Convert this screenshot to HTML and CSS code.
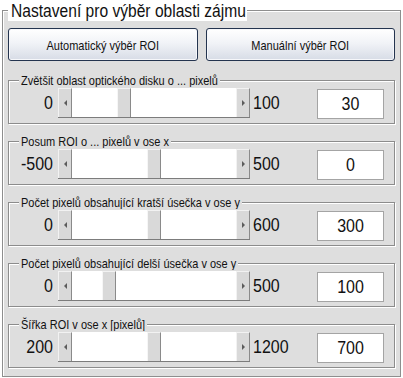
FILE: index.html
```html
<!DOCTYPE html>
<html lang="cs">
<head>
<meta charset="utf-8">
<title>Nastavení pro výběr oblasti zájmu</title>
<link rel="stylesheet" href="styles.css">
</head>
<body>
<section class="panel">
  <h1 class="panel-title"><span class="tall">Nastavení pro výběr oblasti zájmu</span></h1>
  <div class="buttons">
    <button class="btn" type="button"><span class="tall">Automatický výběr ROI</span></button>
    <button class="btn" type="button"><span class="tall">Manuální výběr ROI</span></button>
  </div>

  <div class="group">
    <div class="group-title"><span class="tall">Zvětšit oblast optického disku o ... pixelů</span></div>
    <div class="row">
      <span class="min tall">0</span>
      <div class="slider">
        <span class="arrow left"></span>
        <div class="track"><span class="thumb" style="--v:0.3"></span></div>
        <span class="arrow right"></span>
      </div>
      <span class="max tall">100</span>
      <div class="edit"><span class="tall">30</span></div>
    </div>
  </div>

  <div class="group">
    <div class="group-title"><span class="tall">Posum ROI o ... pixelů v ose x</span></div>
    <div class="row">
      <span class="min tall">-500</span>
      <div class="slider">
        <span class="arrow left"></span>
        <div class="track"><span class="thumb" style="--v:0.5"></span></div>
        <span class="arrow right"></span>
      </div>
      <span class="max tall">500</span>
      <div class="edit"><span class="tall">0</span></div>
    </div>
  </div>

  <div class="group">
    <div class="group-title"><span class="tall">Počet pixelů obsahující kratší úsečka v ose y</span></div>
    <div class="row">
      <span class="min tall">0</span>
      <div class="slider">
        <span class="arrow left"></span>
        <div class="track"><span class="thumb" style="--v:0.5"></span></div>
        <span class="arrow right"></span>
      </div>
      <span class="max tall">600</span>
      <div class="edit"><span class="tall">300</span></div>
    </div>
  </div>

  <div class="group">
    <div class="group-title"><span class="tall">Počet pixelů obsahující delší úsečka v ose y</span></div>
    <div class="row">
      <span class="min tall">0</span>
      <div class="slider">
        <span class="arrow left"></span>
        <div class="track"><span class="thumb" style="--v:0.2"></span></div>
        <span class="arrow right"></span>
      </div>
      <span class="max tall">500</span>
      <div class="edit"><span class="tall">100</span></div>
    </div>
  </div>

  <div class="group">
    <div class="group-title"><span class="tall">Šířka ROI v ose x [pixelů]</span></div>
    <div class="row">
      <span class="min tall">200</span>
      <div class="slider">
        <span class="arrow left"></span>
        <div class="track"><span class="thumb" style="--v:0.5"></span></div>
        <span class="arrow right"></span>
      </div>
      <span class="max tall">1200</span>
      <div class="edit"><span class="tall">700</span></div>
    </div>
  </div>
</section>
</body>
</html>
```

FILE: styles.css
```css
html, body {
  margin: 0;
  padding: 0;
  background: #ffffff;
}

body {
  width: 403px;
  height: 378px;
  overflow: hidden;
  font-family: "Liberation Sans", Arial, sans-serif;
  color: #000;
}

.tall {
  display: inline-block;
  transform: scaleY(1.2);
  transform-origin: 50% 55%;
}

.panel {
  box-sizing: border-box;
  margin: 10px 0 0 2px;
  width: 399px;
  height: 367px;
  border: 1px solid #8e8e8e;
  box-shadow: inset 1px 1px 0 #ffffff, 1px 1px 0 #ffffff;
  background: #dedede;
  padding: 0 5px 0 5px;
}

.panel-title {
  display: block;
  width: max-content;
  margin: -11px 0 0 0;
  padding: 0 1px 0 3px;
  font-size: 15.6px;
  font-weight: normal;
  line-height: 21px;
  height: 21px;
  background: #ffffff;
  color: #111;
}

.buttons {
  display: grid;
  grid-template-columns: 1fr 1fr;
  gap: 8px;
  margin: 7px 0 0 0;
}

.btn {
  height: 33px;
  margin: 0;
  padding: 0;
  border: 1px solid #24344f;
  border-radius: 3px;
  background: linear-gradient(#ffffff 0%, #f1f3f7 45%, #d7dce6 100%);
  box-shadow: inset 0 0 0 1px #f6f7fa;
  font-family: "Liberation Sans", Arial, sans-serif;
  font-size: 11px;
  color: #111;
}

.group {
  box-sizing: border-box;
  height: 44px;
  margin-top: 17px;
  border: 1px solid #8c8c8c;
  box-shadow: inset 1px 1px 0 #ffffff, 1px 1px 0 #ffffff;
}

.buttons + .group {
  margin-top: 19px;
}

.group-title {
  width: max-content;
  margin: -7px 0 0 10px;
  padding: 0 2px;
  font-size: 11px;
  line-height: 13px;
  height: 13px;
  background: #dedede;
  color: #111;
}

.row {
  display: flex;
  align-items: center;
  height: 30px;
  margin-top: 1px;
}

.min {
  width: 44px;
  text-align: right;
  font-size: 16px;
  line-height: 20px;
  color: #111;
}

.max {
  width: 64px;
  margin-left: 3px;
  font-size: 16px;
  line-height: 20px;
  color: #111;
}

.slider {
  display: flex;
  width: 192px;
  height: 30px;
  margin-left: 5px;
  align-self: flex-start;
  border-bottom: 1px solid #7c7c7c;
  box-sizing: border-box;
}

.arrow {
  box-sizing: border-box;
  width: 14px;
  background: #d9d9d9;
  border-top: 1px solid #f2f2f2;
  border-left: 1px solid #f2f2f2;
  border-right: 1px solid #8a8a8a;
  display: flex;
  align-items: center;
  justify-content: center;
}

.arrow::before {
  content: "";
  width: 0;
  height: 0;
  border-top: 3px solid transparent;
  border-bottom: 3px solid transparent;
}

.arrow.left::before {
  border-right: 3px solid #5c5c5c;
}

.arrow.right::before {
  border-left: 3px solid #5c5c5c;
}

.track {
  flex: 1;
  position: relative;
  background: #ffffff;
}

.thumb {
  position: absolute;
  top: 0;
  bottom: 0;
  width: 14px;
  box-sizing: border-box;
  left: calc(var(--v) * (100% - 14px));
  background: #d9d9d9;
  border-left: 1px solid #f6f6f6;
  border-top: 1px solid #f2f2f2;
  border-right: 1px solid #8a8a8a;
}

.edit {
  box-sizing: border-box;
  width: 67px;
  height: 30px;
  margin-top: 1px;
  background: #ffffff;
  border: 1px solid #a4a4a4;
  text-align: center;
  font-size: 16px;
  line-height: 28px;
  color: #111;
}
```
